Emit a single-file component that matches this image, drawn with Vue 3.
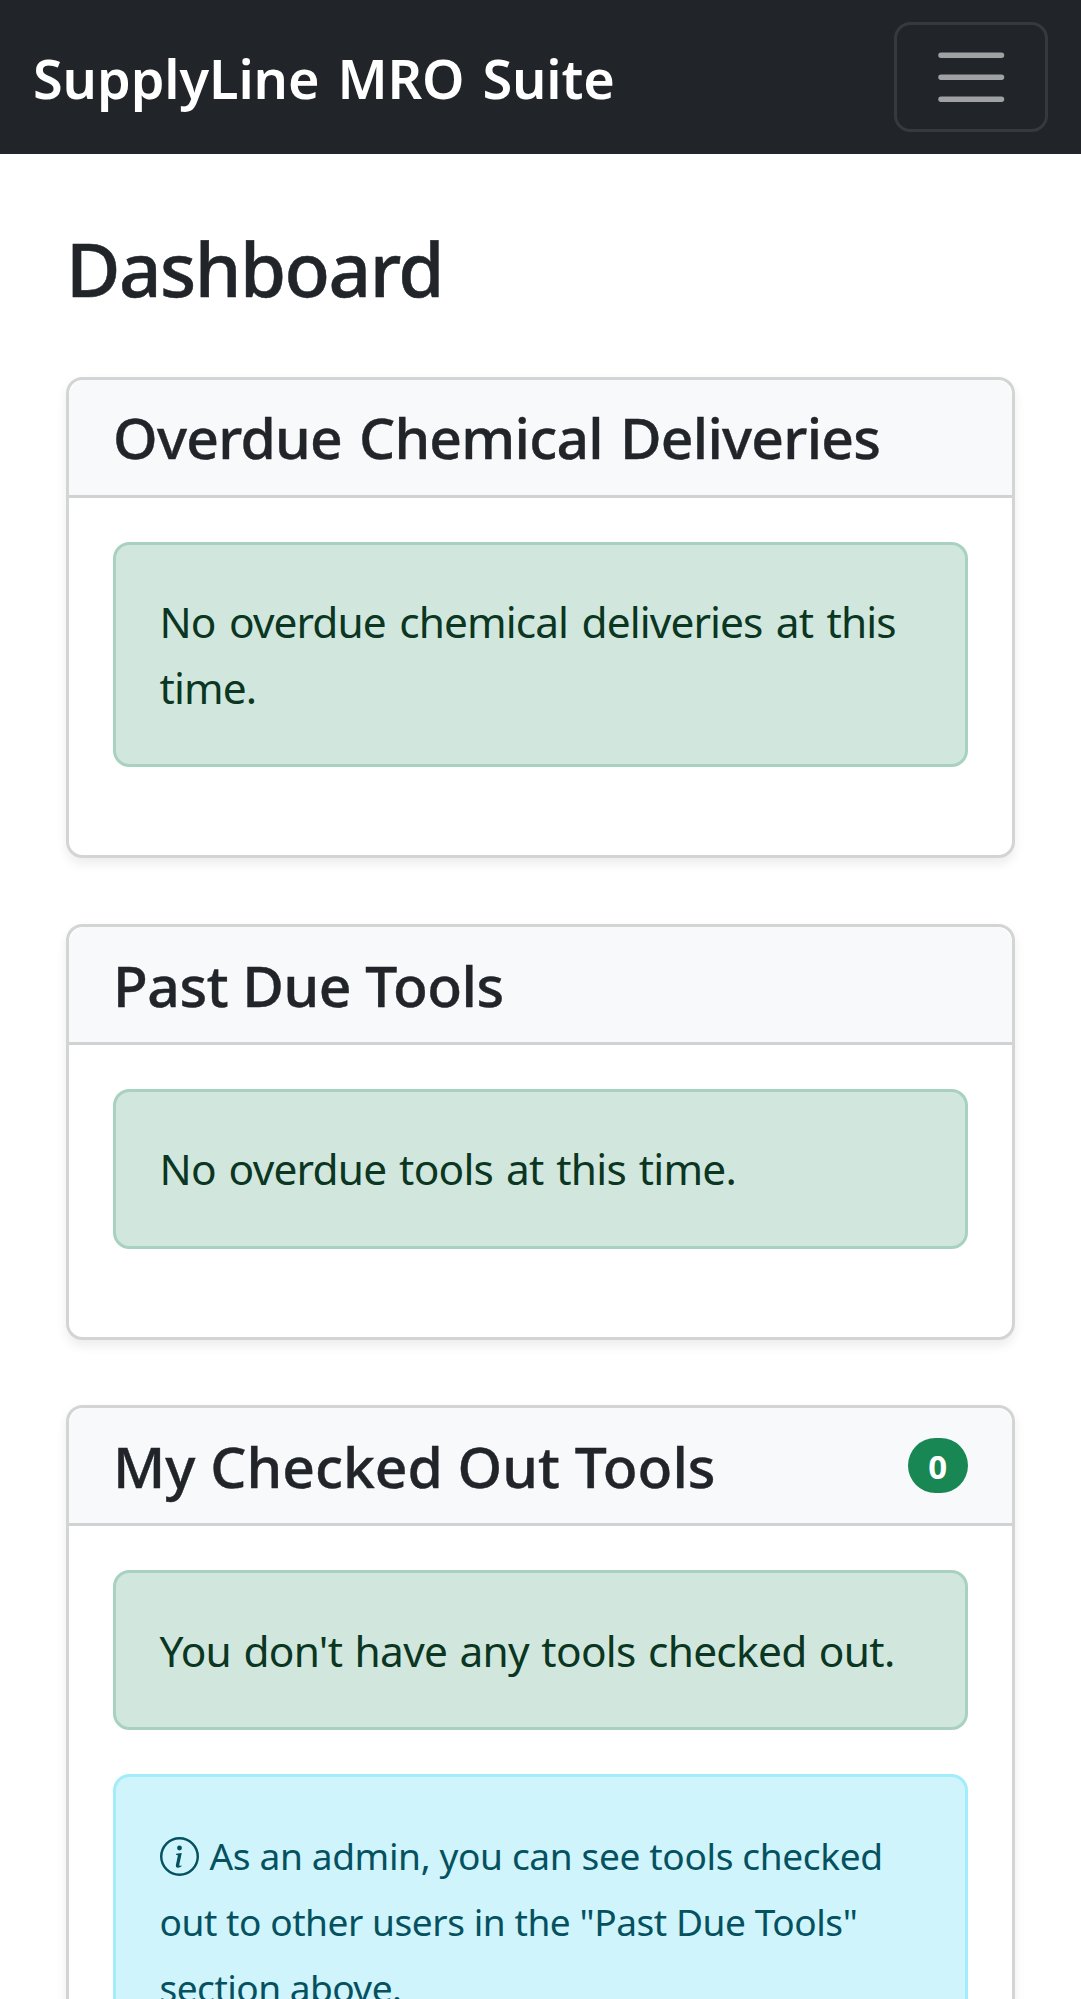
<script setup>
const cards = [
  { id: 'chemicals', title: 'Overdue Chemical Deliveries', lines: ['No overdue chemical deliveries at this', 'time.'] },
  { id: 'past-due', title: 'Past Due Tools', lines: ['No overdue tools at this time.'] },
  { id: 'checked-out', title: 'My Checked Out Tools', count: 0, admin: true, lines: ["You don't have any tools checked out."] }
]
</script>

<template>
  <div class="app">
    <nav class="navbar">
      <a class="brand">SupplyLine MRO Suite</a>
      <button class="toggler" aria-label="Toggle navigation">
        <svg viewBox="0 0 30 30" fill="none" stroke="#a0a1a2" stroke-width="2" stroke-linecap="round" stroke-miterlimit="10">
          <path d="M4 7h22M4 15h22M4 23h22" />
        </svg>
      </button>
    </nav>
    <main class="content">
      <h1>Dashboard</h1>
      <section v-for="card in cards" :key="card.id" class="card" :class="card.id">
        <header class="card-header">
          <h4>{{ card.title }}</h4>
          <span v-if="card.admin" class="badge">{{ card.count }}</span>
        </header>
        <div class="card-body">
          <div class="alert success">
            <div v-for="line in card.lines" :key="line">{{ line }}</div>
          </div>
          <div v-if="card.admin" class="alert info">
            <div class="row first"><small><svg class="icon" viewBox="0 0 16 16" fill="currentColor">
              <path d="M8 15A7 7 0 1 1 8 1a7 7 0 0 1 0 14m0 1A8 8 0 1 0 8 0a8 8 0 0 0 0 16" />
              <path d="m8.93 6.588-2.29.287-.082.38.45.083c.294.07.352.176.288.469l-.738 3.468c-.194.897.105 1.319.808 1.319.545 0 1.178-.252 1.465-.598l.088-.416c-.2.176-.492.246-.686.246-.275 0-.375-.193-.304-.533zM9 4.5a1 1 0 1 1-2 0 1 1 0 0 1 2 0" />
            </svg>As an admin, you can see tools checked</small></div>
            <div class="row second"><small>out to other users in the "Past Due Tools"</small></div>
            <div class="row third"><small>section above.</small></div>
          </div>
        </div>
      </section>
    </main>
  </div>
</template>

<style>
body {
  margin: 0;
  background: #fff;
}
</style>

<style scoped>
.app,
.app * {
  box-sizing: border-box;
}
.app {
  height: 1999px;
  overflow: hidden;
  background: #fff;
  color: #212529;
  font-family: "Segoe UI", "Noto Sans", "Open Sans", sans-serif;
  font-size: 42.4px;
  line-height: 66px;
  white-space: nowrap;
}
.navbar {
  height: 154px;
  padding: 0 33px;
  display: flex;
  align-items: center;
  justify-content: space-between;
  background: #212529;
}
.brand {
  padding-top: 2px;
  color: #fff;
  font-size: 54px;
  font-weight: 600;
  letter-spacing: -0.1px;
  word-spacing: 4px;
}
.toggler {
  width: 154px;
  height: 110px;
  padding: 0;
  display: flex;
  align-items: center;
  justify-content: center;
  background: transparent;
  border: 3px solid #353a3c;
  border-radius: 16.5px;
}
.toggler svg {
  width: 82.5px;
  height: 82.5px;
}
.content {
  padding: 67px 66px 0;
}
h1 {
  height: 92px;
  margin: 0 0 64px;
  padding-top: 1px;
  font-size: 74.5px;
  font-weight: 500;
  line-height: 92px;
  letter-spacing: -1.52px;
  -webkit-text-stroke: 0.5px #212529;
}
.card {
  margin-bottom: 66px;
  background: #fff;
  border: 3px solid #d3d4d4;
  border-radius: 16.5px;
  box-shadow: 0 5.5px 11px rgba(0, 0, 0, 0.075);
}
.past-due {
  margin-bottom: 65.5px;
}
.card-header {
  height: 118px;
  padding: 0 44px;
  display: flex;
  align-items: center;
  justify-content: space-between;
  background: #f8f9fb;
  border-bottom: 3px solid #d1d2d3;
  border-radius: 16.5px 16.5px 0 0;
}
h4 {
  margin: 0;
  font-size: 57px;
  font-weight: 500;
  line-height: 71px;
  letter-spacing: -0.48px;
  -webkit-text-stroke: 0.4px #212529;
}
.chemicals h4 {
  letter-spacing: -0.76px;
  word-spacing: 3px;
}
.past-due h4,
.checked-out h4 {
  padding-top: 1px;
}
.checked-out h4 {
  letter-spacing: 0;
}
.badge {
  width: 60.5px;
  height: 55.5px;
  padding-top: 1px;
  border-radius: 27.75px;
  background: #198754;
  color: #fff;
  font-size: 33px;
  font-weight: 700;
  line-height: 55px;
  text-align: center;
}
.card-body {
  padding: 44px;
}
.alert {
  padding: 43.75px 43.5px;
  border: 3px solid;
  border-radius: 16.5px;
}
.checked-out .success {
  margin-bottom: 44px;
  padding: 44.75px 43.5px 42.75px;
  letter-spacing: -0.7px;
  word-spacing: 2px;
}
.alert:last-child {
  margin-bottom: 44px;
}
.chemicals .alert {
  padding: 43.5px 43.5px;
  letter-spacing: -0.9px;
  word-spacing: 3.3px;
}
.past-due .alert {
  letter-spacing: -0.76px;
  word-spacing: 2.5px;
}
.success {
  color: #0a3622;
  background: #d1e7dd;
  border-color: #a8d2bf;
}
.info {
  padding-top: 44.75px;
  color: #055160;
  background: #cff4fc;
  border-color: #a3ecfa;
}
small {
  font-size: 37.1px;
  line-height: 1.5;
}
.first small {
  letter-spacing: -0.37px;
}
.second small {
  letter-spacing: -0.45px;
}
.third small {
  letter-spacing: -0.53px;
}
.row {
  height: 66px;
}
.icon {
  width: 39px;
  height: 39px;
  margin-right: 11px;
  vertical-align: -6px;
}
</style>
